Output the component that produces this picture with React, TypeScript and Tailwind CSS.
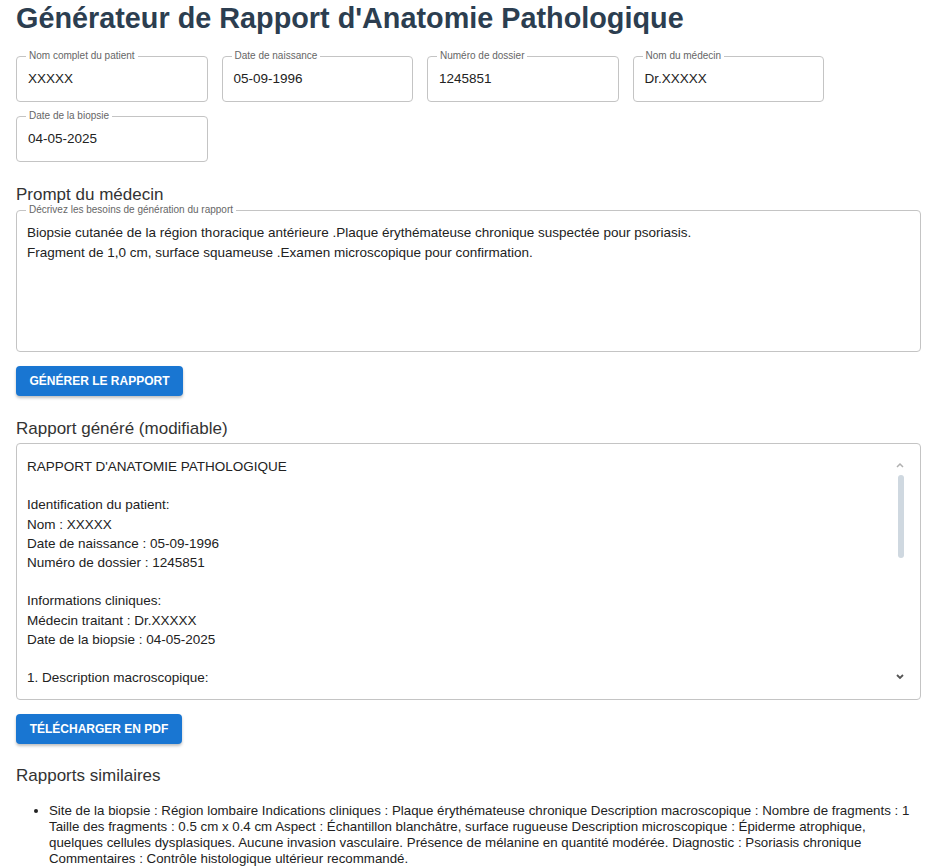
import React from "react";

const font = "font-['Liberation_Sans',Arial,sans-serif]";

type FieldProps = {
  label: string;
  value: string;
};

const Field = ({label, value}: FieldProps) => (
  <div className="relative w-[191.5px] h-[46px] border border-[#c4c4c4] rounded-[4px] flex items-center px-[11px]">
    <span className="absolute left-[9px] -top-[7px] bg-white px-[3px] text-[10px] leading-[12px] text-[#666]">
      {label}
    </span>
    <span className="text-[13.5px] text-[#222]">{value}</span>
  </div>
);

const reportLines = [
  "RAPPORT D'ANATOMIE PATHOLOGIQUE",
  "",
  "Identification du patient:",
  "Nom : XXXXX",
  "Date de naissance : 05-09-1996",
  "Numéro de dossier : 1245851",
  "",
  "Informations cliniques:",
  "Médecin traitant : Dr.XXXXX",
  "Date de la biopsie : 04-05-2025",
  "",
  "1. Description macroscopique:",
];

const Button = ({children, width}: {children: React.ReactNode; width: string}) => (
  <button
    className={`${width} h-[30px] rounded-[4px] bg-[#1976d2] text-white text-[12px] font-bold uppercase shadow-[0_2px_3px_rgba(0,0,0,0.25)] flex items-center justify-center`}
  >
    {children}
  </button>
);

export default function App() {
  return (
    <div className={`${font} bg-white min-h-screen pl-4 pr-[14px] pb-4 text-[#222]`}>
      <h1 className="text-[28.8px] font-bold leading-[32px] text-[#2c3e50] pt-[2px]">
        Générateur de Rapport d'Anatomie Pathologique
      </h1>

      <div className="mt-[22px] flex flex-wrap gap-[14px] w-[820px]">
        <Field label="Nom complet du patient" value="XXXXX"/>
        <Field label="Date de naissance" value="05-09-1996"/>
        <Field label="Numéro de dossier" value="1245851"/>
        <Field label="Nom du médecin" value="Dr.XXXXX"/>
        <Field label="Date de la biopsie" value="04-05-2025"/>
      </div>

      <h2 className="mt-[23px] text-[17px] leading-[20px] text-[#333]">Prompt du médecin</h2>
      <div className="relative mt-[5px] h-[142px] border border-[#c4c4c4] rounded-[4px] px-[10px] pt-[12px] text-[13.5px] leading-[20px] text-[#222]">
        <span className="absolute left-[9px] -top-[7px] bg-white px-[3px] text-[10px] leading-[12px] text-[#666]">
          Décrivez les besoins de génération du rapport
        </span>
        <div>Biopsie cutanée de la région thoracique antérieure .Plaque érythémateuse chronique suspectée pour psoriasis.</div>
        <div>Fragment de 1,0 cm, surface squameuse .Examen microscopique pour confirmation.</div>
      </div>

      <div className="mt-[14px]">
        <Button width="w-[167px]">Générer le rapport</Button>
      </div>

      <h2 className="mt-[23px] text-[17px] leading-[20px] text-[#333]">Rapport généré (modifiable)</h2>
      <div className="relative mt-[4px] h-[257px] border border-[#c4c4c4] rounded-[4px] overflow-hidden">
        <div className="pl-[10px] pr-[30px] pt-[13px] text-[13.5px] leading-[19.2px] text-[#222]">
          {reportLines.map((line, i) => (
            <div key={i} className="h-[19.2px]">{line}</div>
          ))}
        </div>
        <svg className="absolute right-[16px] top-[18px]" width="8" height="6" viewBox="0 0 8 6">
          <path d="M1 5 L4 2 L7 5" fill="none" stroke="#b0b0b0" strokeWidth="1.5"/>
        </svg>
        <div className="absolute right-[16px] top-[31px] w-[6px] h-[83px] rounded-[3px] bg-[#cfd8e0]"/>
        <svg className="absolute right-[16px] bottom-[19px]" width="8" height="6" viewBox="0 0 8 6">
          <path d="M1 1 L4 4 L7 1" fill="none" stroke="#555" strokeWidth="1.8"/>
        </svg>
      </div>

      <div className="mt-[14px]">
        <Button width="w-[166px]">Télécharger en PDF</Button>
      </div>

      <h2 className="mt-[22px] text-[17px] leading-[20px] text-[#333]">Rapports similaires</h2>
      <ul className="mt-[17px] pl-[33px] list-disc text-[13.3px] leading-[16px] text-[#222]">
        <li>
          Site de la biopsie : Région lombaire Indications cliniques : Plaque érythémateuse chronique Description macroscopique : Nombre de fragments : 1 Taille des fragments : 0.5 cm x 0.4 cm Aspect : Échantillon blanchâtre, surface rugueuse Description microscopique : Épiderme atrophique, quelques cellules dysplasiques. Aucune invasion vasculaire. Présence de mélanine en quantité modérée. Diagnostic : Psoriasis chronique Commentaires : Contrôle histologique ultérieur recommandé.
        </li>
      </ul>
    </div>
  );
}
